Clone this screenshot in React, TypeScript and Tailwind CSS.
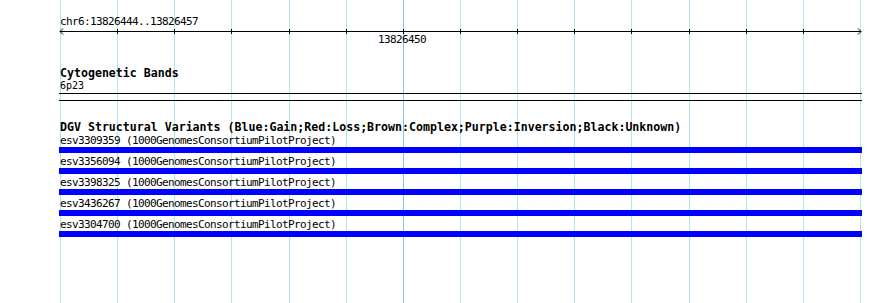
import React from "react";

const GRID_X = Array.from({ length: 15 }, (_, k) => Math.round(60 + (k * 800) / 14));
const LEFT = 59;

const variants = [
  "esv3309359",
  "esv3356094",
  "esv3398325",
  "esv3436267",
  "esv3304700",
];

function Grid() {
  return (
    <svg className="absolute inset-0" width={890} height={303}>
      {GRID_X.map((x, i) => (
        <line
          key={x}
          x1={x + 0.5}
          x2={x + 0.5}
          y1={0}
          y2={303}
          stroke={i === 6 ? "#86c4e4" : "#aee8ef"}
          strokeWidth={1}
        />
      ))}
    </svg>
  );
}

function Ruler() {
  const y = 3.5;
  return (
    <svg width={803} height={7} className="block">
      <line x1={1} x2={802} y1={y} y2={y} stroke="#000" strokeWidth={1} />
      <polyline points={`4,0.5 1,${y} 4,6.5`} fill="none" stroke="#000" strokeWidth={1} />
      <polyline points={`799,0.5 802,${y} 799,6.5`} fill="none" stroke="#000" strokeWidth={1} />
      {GRID_X.slice(1, -1).map((x) => (
        <line key={x} x1={x - LEFT + 0.5} x2={x - LEFT + 0.5} y1={1} y2={6} stroke="#000" strokeWidth={1} />
      ))}
    </svg>
  );
}

export default function App() {
  const mono = "font-['DejaVu_Sans_Mono',monospace] text-black";
  // small gd-style text: 6px per glyph
  const small = "text-[11px] tracking-[-0.62px]";
  return (
    <div className="relative w-[890px] h-[303px] overflow-hidden bg-white">
      <Grid />
      <div className={`relative ml-[59px] w-[803px] pt-[15px] ${mono}`}>
        {/* ruler */}
        <div className={`pl-px ${small} leading-[13px]`}>chr6:13826444..13826457</div>
        <Ruler />
        <div className={`-mt-[2px] ml-[319px] ${small} leading-[13px]`}>13826450</div>

        {/* cytogenetic bands */}
        <div className="mt-[21px] pl-px text-[11.6px] leading-[12px] font-bold">Cytogenetic Bands</div>
        <div className="mt-px pl-px text-[10px] leading-[12px]">6p23</div>
        <div className="mt-px h-[8px] border-y border-black" />

        {/* DGV */}
        <div className="mt-[21px] pl-px text-[11.6px] leading-[10px] font-bold">
          DGV Structural Variants (Blue:Gain;Red:Loss;Brown:Complex;Purple:Inversion;Black:Unknown)
        </div>
        {variants.map((id) => (
          <div key={id} className="pt-[2px]">
            <div className={`pl-px ${small} leading-[13px]`}>
              {id} (1000GenomesConsortiumPilotProject)
            </div>
            <div className="h-[6px] bg-[#0000ff]" />
          </div>
        ))}
      </div>
    </div>
  );
}
